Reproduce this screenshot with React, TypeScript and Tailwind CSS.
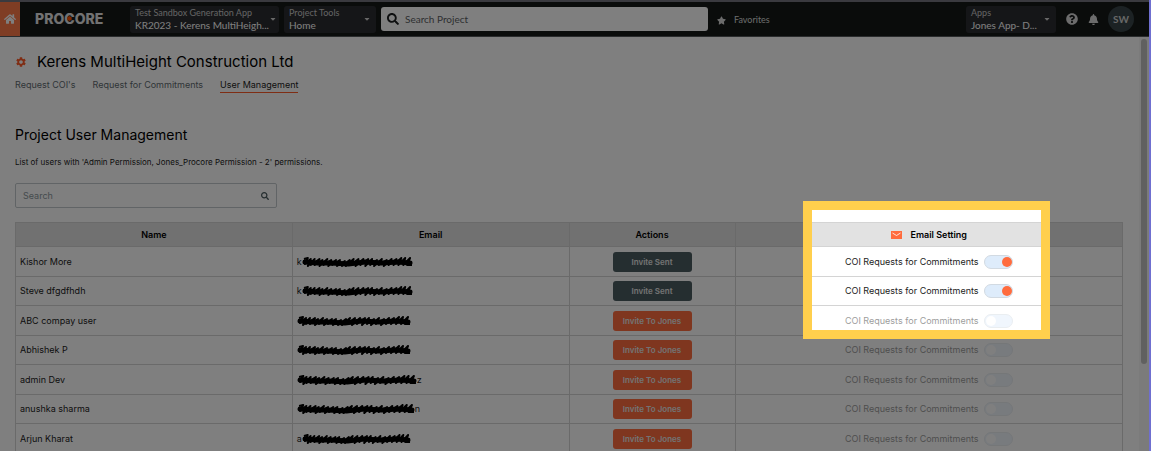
import React from "react";
import { FaBell, FaCaretDown, FaHome, FaQuestionCircle, FaSearch, FaStar } from "react-icons/fa";
import { MdSettings } from "react-icons/md";

type User = {
  name: string;
  head: string;
  tail: string;
  markWidth: string;
  invited: boolean;
};

const users: User[] = [
  { name: "Kishor More", head: "k", tail: "", markWidth: "w-[111px]", invited: true },
  { name: "Steve dfgdfhdh", head: "k", tail: "", markWidth: "w-[111px]", invited: true },
  { name: "ABC compay user", head: "", tail: "", markWidth: "w-[114px]", invited: false },
  { name: "Abhishek P", head: "", tail: "", markWidth: "w-[114px]", invited: false },
  { name: "admin Dev", head: "", tail: "z", markWidth: "w-[120px]", invited: false },
  { name: "anushka sharma", head: "", tail: "n", markWidth: "w-[118px]", invited: false },
  { name: "Arjun Kharat", head: "a", tail: "", markWidth: "w-[109px]", invited: false },
];

const tabs = ["Request COI's", "Request for Commitments", "User Management"];

const Picker = ({ label, value, className }: { label: string; value: string; className: string }) => (
  <button
    type="button"
    className={`flex h-[27px] items-center justify-between rounded-[3px] bg-[#2b2d31] px-[5px] text-left whitespace-nowrap ${className}`}
  >
    <span>
      <span className="block text-[9px] leading-[12px] text-[#c8c8c8]">{label}</span>
      <span className="block text-[10px] leading-[12px] text-white">{value}</span>
    </span>
    <FaCaretDown className="size-2 shrink-0 text-[#d0d0d0]" />
  </button>
);

const Logo = () => (
  <a
    href="#"
    aria-label="Procore home"
    className="ml-[15px] w-[69px] shrink-0 font-['Inter',sans-serif] text-[14px] leading-none font-extrabold text-[#e4e4e4]"
  >
    PRO
    <span className="relative">
      C
      <svg viewBox="0 0 6 6" className="absolute top-[6px] left-[3px] size-[5px]" aria-hidden="true">
        <path d="M3 0l2.6 1.5v3L3 6 .4 4.5v-3z" fill="#ff5100" />
      </svg>
    </span>
    ORE
  </a>
);

const Header = () => (
  <header className="flex h-[37px] items-center border-t-2 border-b border-t-[#74757f] border-b-[#55585a] bg-[#141817] font-['Lato',sans-serif]">
    <a href="#" aria-label="Home" className="flex h-full w-5 shrink-0 items-center justify-center bg-[#ff7a48] text-white">
      <FaHome className="size-3" />
    </a>
    <Logo />
    <Picker label="Test Sandbox Generation App" value="KR2023 - Kerens MultiHeigh..." className="ml-[26px] w-[149px] shrink-0" />
    <Picker label="Project Tools" value="Home" className="ml-[5px] w-[92px] shrink-0" />
    <label className="ml-[5px] flex h-6 w-[327px] items-center gap-[6px] rounded-[3px] bg-white px-[6px]">
      <FaSearch className="size-3 text-[#1c1f20]" />
      <input
        type="text"
        aria-label="Search Project"
        placeholder="Search Project"
        className="min-w-0 flex-1 bg-transparent text-[10px] text-black outline-none placeholder:text-[#5c6063]"
      />
    </label>
    <button type="button" className="ml-[9px] flex items-center gap-2 pt-[2px] text-[9px] text-[#d8d8d8]">
      <FaStar className="size-[9px]" />
      Favorites
    </button>
    <div className="mr-[15px] ml-auto flex items-center">
      <Picker label="Apps" value="Jones App- D..." className="w-[90px]" />
      <button type="button" aria-label="Help" className="ml-[10px] text-[#d8d8d8]">
        <FaQuestionCircle className="size-3" />
      </button>
      <button type="button" aria-label="Notifications" className="ml-[10px] text-[#d8d8d8]">
        <FaBell className="size-[11px]" />
      </button>
      <button type="button" className="ml-[9px] size-[26px] rounded-full bg-[#384548] text-[10px] font-bold text-[#d0d0d0]">
        SW
      </button>
    </div>
  </header>
);

// Marker scribble that hides an address
const Redaction = ({ width }: { width: string }) => (
  <svg viewBox="0 0 114 10" preserveAspectRatio="none" className={`h-[10px] shrink-0 ${width}`} role="img" aria-label="Hidden email">
    <path
      d="M2 2L6 1 3 7 9 2 6 9 13 2 9 8 18 2 13 8 21 3 18 9 26 2 22 8 30 3 27 9 35 3 31 8 39 3 36 9 44 4 41 9 49 3 45 9 53 2 50 8 58 2 55 9 63 2 60 8 68 2 65 9 72 2 70 8 77 3 74 9 82 2 79 8 87 3 84 9 92 2 89 8 97 2 94 8 102 1 99 8 106 1 104 8 111 1 108 8 113 8"
      fill="none"
      stroke="#000"
      strokeWidth="2"
      strokeLinejoin="round"
    />
    <path d="M3 5L16 6 30 6 48 7 64 5 82 6 98 5 111 6" fill="none" stroke="#000" strokeWidth="5" strokeLinecap="round" />
  </svg>
);

const Toggle = ({ on }: { on: boolean }) => (
  <label className={`flex items-center justify-center gap-[5px] ${on ? "" : "opacity-45"}`}>
    <span>COI Requests for Commitments</span>
    <input
      type="checkbox"
      role="switch"
      defaultChecked={on}
      disabled={!on}
      className="h-[14px] w-[29px] appearance-none rounded-full border border-[#d2dae2] bg-[#deecfb] p-px before:block before:size-[10px] before:rounded-full before:bg-white checked:before:ml-4 checked:before:bg-[#ff6c3e]"
    />
  </label>
);

const cell = "border border-[#d4d4d4]";

const UserTable = () => (
  <div className="relative mt-[14px]">
    <table className="w-full table-fixed border-collapse text-[9px] leading-3 text-[#222]">
      <thead>
        <tr className="h-6 bg-[#e2e2e2] text-black">
          <th className={`w-[25%] font-semibold ${cell}`}>Name</th>
          <th className={`w-[25%] font-semibold ${cell}`}>Email</th>
          <th className={`w-[15%] font-semibold ${cell}`}>Actions</th>
          <th className={`w-[35%] font-semibold ${cell}`}>
            <span className="flex items-center justify-center gap-[9px]">
              <svg viewBox="0 0 22 16" className="h-2 w-[11px]" aria-hidden="true">
                <path d="M0 0h22v16H0z" fill="#ff6c3e" />
                <path d="M3 4l8 5 8-5" fill="none" stroke="#fff" strokeWidth="1.6" />
              </svg>
              Email Setting
            </span>
          </th>
        </tr>
      </thead>
      <tbody>
        {users.map((user) => (
          <tr key={user.name} className="odd:h-[30px] even:h-[29px]">
            <td className={`px-1 ${cell}`}>{user.name}</td>
            <td className={`px-1 ${cell}`}>
              <span className="flex items-center">
                {user.head}
                <Redaction width={user.markWidth} />
                {user.tail}
              </span>
            </td>
            <td className={`text-center ${cell}`}>
              <button
                type="button"
                className={`mx-auto block h-5 w-[79px] rounded-[3px] text-[8px] font-semibold text-[#e6e6e6] ${
                  user.invited ? "bg-[#4b5c60]" : "bg-[#ff6c3e]"
                }`}
              >
                {user.invited ? "Invite Sent" : "Invite To Jones"}
              </button>
            </td>
            <td className={cell}>
              <Toggle on={user.invited} />
            </td>
          </tr>
        ))}
      </tbody>
    </table>

    {/* Spotlight: dims everything outside the frame */}
    <div className="pointer-events-none absolute -top-[21px] right-[73px] z-10 h-[138px] w-[247px] border-[9px] border-[#ffcf4d] shadow-[0_0_0_2000px_rgba(0,0,0,0.5)]" />
  </div>
);

const App: React.FC = () => {
  return (
    <div className="relative h-screen overflow-hidden border-r-2 border-[#6f6fd0] bg-white font-['Inter',sans-serif] text-[#222]">
      <Header />
      <main className="pt-4 pr-[26px] pl-[15px]">
        <div className="flex items-center gap-[10px]">
          <MdSettings className="size-3 text-[#ff5a28]" />
          <h1 className="text-[15px] leading-[18px] text-black">Kerens MultiHeight Construction Ltd</h1>
        </div>
        <nav className="mt-[6px] flex gap-[17px] text-[9px] leading-[15px]">
          {tabs.map((tab) => (
            <a
              key={tab}
              href="#"
              className={tab === "User Management" ? "border-b border-[#ff5a28] text-[#222]" : "text-[#5f6b70]"}
            >
              {tab}
            </a>
          ))}
        </nav>

        <h2 className="mt-[33px] text-[14px] leading-[18px] text-black">Project User Management</h2>
        <p className="mt-3 text-[8px] leading-3">
          List of users with 'Admin Permission, Jones_Procore Permission - 2' permissions.
        </p>
        <label className="mt-[15px] flex h-[25px] w-[262px] items-center rounded-[2px] border border-[#c3c9cc] px-[7px]">
          <input
            type="search"
            aria-label="Search"
            placeholder="Search"
            className="min-w-0 flex-1 bg-transparent text-[9px] outline-none placeholder:text-[#8b979c]"
          />
          <FaSearch className="size-2 text-[#4b5c60]" />
        </label>
        <UserTable />
      </main>
      {/* Page scrollbar */}
      <div className="absolute top-[37px] right-0 bottom-0 w-[10px] bg-[#f6f6f6]">
        <div className="mx-auto mt-[2px] h-[325px] w-[6px] rounded-full bg-[#c1c1c1]" />
      </div>
    </div>
  );
};

export default App;
